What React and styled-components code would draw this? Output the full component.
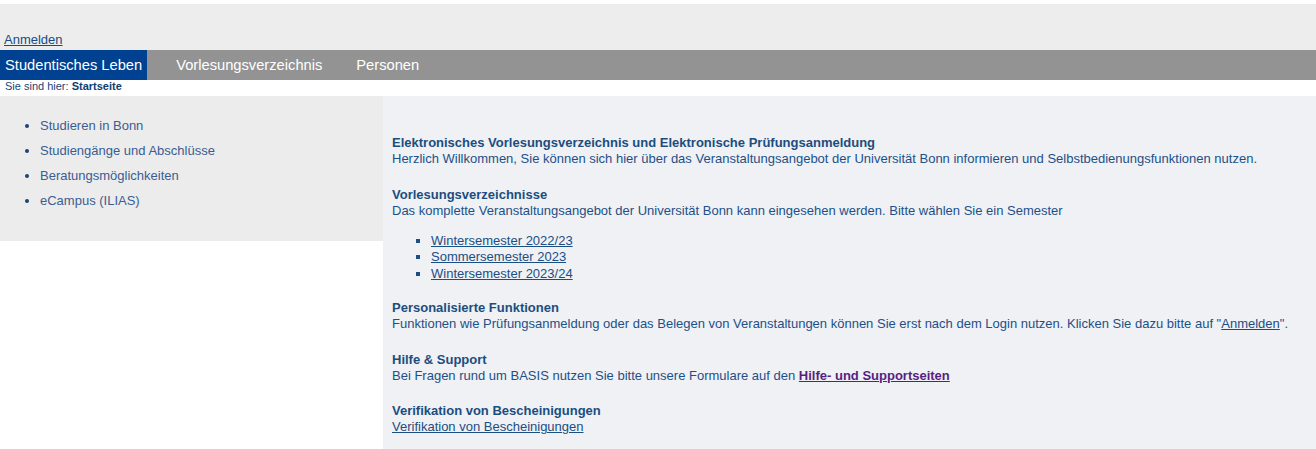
import React from "react";
import styled, { createGlobalStyle } from "styled-components";

const Global = createGlobalStyle`
  html, body { margin: 0; padding: 0; background: #ffffff; }
  body { font-family: "Liberation Sans", Arial, sans-serif; font-size: 13px; }
`;

const Page = styled.div`
  padding-top: 4px;
  min-height: 445px;
  display: flex;
  flex-direction: column;
`;

const Header = styled.div`
  background: #ededed;
  height: 46px;
  display: flex;
  align-items: flex-end;
  padding-left: 4px;
`;

const LoginLink = styled.a`
  color: #184a85;
  font-size: 13px;
  text-decoration: underline;
  line-height: 15px;
  margin-bottom: 3px;
`;

const Nav = styled.nav`
  background: #939393;
  height: 30px;
  display: flex;
  align-items: stretch;
`;

const NavItem = styled.a`
  display: flex;
  align-items: center;
  padding: 0 ${p => (p.$active ? "5px" : "17px")} 0 ${p => (p.$active ? "5px" : "17px")};
  margin-left: ${p => p.$gap || "0"};
  background: ${p => (p.$active ? "#004191" : "transparent")};
  color: #ffffff;
  font-size: 14.7px;
  text-decoration: none;
  white-space: nowrap;
`;

const Crumb = styled.div`
  height: 16px;
  font-size: 11px;
  line-height: 12px;
  padding-left: 5px;
  color: #16457a;
  background: #fff;
  b { font-weight: bold; color: #0f3d6e; }
`;

const Main = styled.div`
  display: flex;
  flex: 1;
  align-items: stretch;
`;

const Side = styled.div`
  width: 383px;
  flex: none;
  align-self: flex-start;
  background: #ececec;
  height: 145px;
`;

const SideList = styled.ul`
  margin: 0;
  padding: 17px 0 0 40px;
  list-style: disc;
  color: #1b4477;
`;

const SideItem = styled.li`
  font-size: 13px;
  line-height: 25px;
  a { color: #3b5d92; text-decoration: none; }
`;

const Content = styled.div`
  flex: 1;
  background: #eff1f5;
  padding: 39px 0 12px 9px;
  color: #1d5087;
  font-size: 13px;
  line-height: 16px;
`;

const Section = styled.div`
  margin-bottom: 19.5px;
  &:last-child { margin-bottom: 0; }
`;

const Heading = styled.div`
  font-weight: bold;
  color: #1c4d7e;
`;

const SemList = styled.ul`
  list-style: square;
  margin: 14px 0 -1.5px 0;
  padding-left: 39px;
  color: #1b4e83;
  li { line-height: 16.5px; }
`;

const Link = styled.a`
  color: ${p => (p.$visited ? "#5a1e80" : "#1b4e83")};
  font-weight: ${p => (p.$bold ? "bold" : "normal")};
  text-decoration: underline;
`;

export default function App() {
  return (
    <>
      <Global />
      <Page>
        <Header>
          <LoginLink href="#">Anmelden</LoginLink>
        </Header>
        <Nav>
          <NavItem $active href="#">Studentisches Leben</NavItem>
          <NavItem $gap="12px" href="#">Vorlesungsverzeichnis</NavItem>
          <NavItem href="#">Personen</NavItem>
        </Nav>
        <Crumb>Sie sind hier: <b>Startseite</b></Crumb>
        <Main>
          <Side>
            <SideList>
              <SideItem><a href="#">Studieren in Bonn</a></SideItem>
              <SideItem><a href="#">Studiengänge und Abschlüsse</a></SideItem>
              <SideItem><a href="#">Beratungsmöglichkeiten</a></SideItem>
              <SideItem><a href="#">eCampus (ILIAS)</a></SideItem>
            </SideList>
          </Side>
          <Content>
            <Section>
              <Heading>Elektronisches Vorlesungsverzeichnis und Elektronische Prüfungsanmeldung</Heading>
              Herzlich Willkommen, Sie können sich hier über das Veranstaltungsangebot der Universität Bonn informieren und Selbstbedienungsfunktionen nutzen.
            </Section>
            <Section>
              <Heading>Vorlesungsverzeichnisse</Heading>
              Das komplette Veranstaltungsangebot der Universität Bonn kann eingesehen werden. Bitte wählen Sie ein Semester
              <SemList>
                <li><Link href="#">Wintersemester 2022/23</Link></li>
                <li><Link href="#">Sommersemester 2023</Link></li>
                <li><Link href="#">Wintersemester 2023/24</Link></li>
              </SemList>
            </Section>
            <Section>
              <Heading>Personalisierte Funktionen</Heading>
              Funktionen wie Prüfungsanmeldung oder das Belegen von Veranstaltungen können Sie erst nach dem Login nutzen. Klicken Sie dazu bitte auf "<Link href="#">Anmelden</Link>".
            </Section>
            <Section>
              <Heading>Hilfe &amp; Support</Heading>
              Bei Fragen rund um BASIS nutzen Sie bitte unsere Formulare auf den <Link href="#" $bold $visited>Hilfe- und Supportseiten</Link>
            </Section>
            <Section>
              <Heading>Verifikation von Bescheinigungen</Heading>
              <Link href="#">Verifikation von Bescheinigungen</Link>
            </Section>
          </Content>
        </Main>
      </Page>
    </>
  );
}
